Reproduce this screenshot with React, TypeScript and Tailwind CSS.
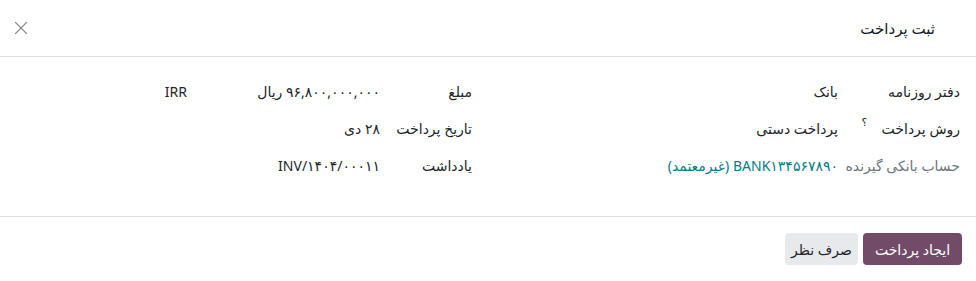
import { X } from "lucide-react";

const font = { fontFamily: '"Noto Sans", "DejaVu Sans", sans-serif' };

const Row = ({ label, children, labelClass = "text-[#212529] font-medium", w }: { label: React.ReactNode; children: React.ReactNode; labelClass?: string; w: string }) => (
  <div className="flex items-center h-[37px]">
    <div className={`${w} shrink-0 ${labelClass}`}>{label}</div>
    <div className="flex-1 flex items-center">{children}</div>
  </div>
);

export default function App() {
  return (
    <div dir="rtl" className="w-[976px] h-[281px] bg-white text-[14px] text-[#212529]" style={font}>
      <div className="h-[57px] flex items-center justify-between pr-[41px] pl-[10px] border-b border-[#dee2e6]">
        <h4 className="text-[15px] text-[#111827] font-medium">ثبت پرداخت</h4>
        <button className="w-[22px] h-[22px] flex items-center justify-center text-[#8a8a8a]">
          <X className="w-[24px] h-[24px]" strokeWidth={1.2} />
        </button>
      </div>

      <div className="h-[160px] flex pt-[16px] pr-4 border-b border-[#dee2e6]">
        <div className="w-[488px]">
          <Row label="دفتر روزنامه" w="w-[122px]">بانک</Row>
          <Row label={<span className="relative">روش پرداخت <span className="absolute -top-[5px] -left-[20px] text-[11px]">؟</span></span>} w="w-[122px]">پرداخت دستی</Row>
          <Row label="حساب بانکی گیرنده" labelClass="text-[#6c757d]" w="w-[122px]">
            <span className="text-[#017e84]">BANK۱۳۴۵۶۷۸۹۰ (غیرمعتمد)</span>
          </Row>
        </div>
        <div className="w-[472px]">
          <Row label="مبلغ" w="w-[92px]">
            <span className="w-[193px]">۹۶,۸۰۰,۰۰۰,۰۰۰ ریال</span>
            <span>IRR</span>
          </Row>
          <Row label="تاریخ پرداخت" w="w-[92px]">۲۸ دی</Row>
          <Row label="یادداشت" w="w-[92px]">INV/۱۴۰۴/۰۰۰۱۱</Row>
        </div>
      </div>

      <div className="flex gap-[5px] pr-[14px] pt-[16px]">
        <button className="h-[32px] w-[99px] rounded-[4px] bg-[#714b67] text-white font-medium">ایجاد پرداخت</button>
        <button className="h-[32px] w-[73px] rounded-[4px] bg-[#e7e9ed] text-[#212529] font-medium">صرف نظر</button>
      </div>
    </div>
  );
}
